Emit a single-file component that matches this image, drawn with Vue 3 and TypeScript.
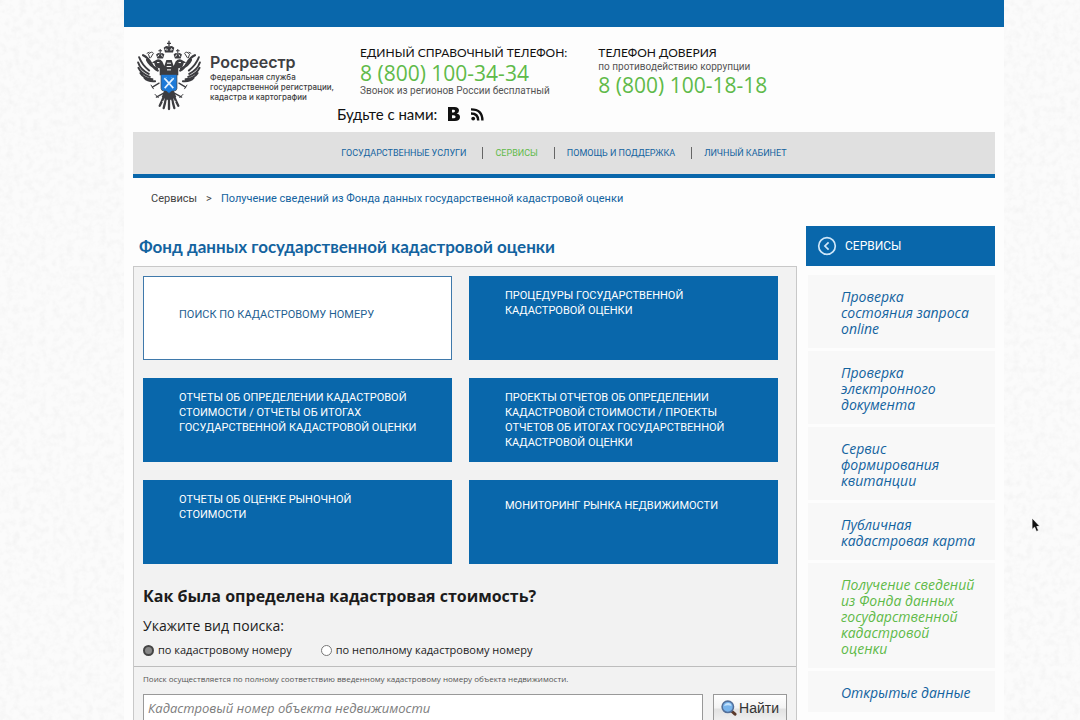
<script setup lang="ts">
import { ref } from 'vue'

interface Tile { text: string; kind: 'active' | 'top' | 'single' }
interface ServiceLink { text: string; current?: boolean }

const navItems = [
  { text: 'Государственные услуги', current: false },
  { text: 'Сервисы', current: true },
  { text: 'Помощь и поддержка', current: false },
  { text: 'Личный кабинет', current: false },
]

const tiles: Tile[] = [
  { text: 'Поиск по кадастровому номеру', kind: 'active' },
  { text: 'Процедуры государственной кадастровой оценки', kind: 'top' },
  { text: 'Отчеты об определении кадастровой стоимости / Отчеты об итогах государственной кадастровой оценки', kind: 'top' },
  { text: 'Проекты отчетов об определении кадастровой стоимости / Проекты отчетов об итогах государственной кадастровой оценки', kind: 'top' },
  { text: 'Отчеты об оценке рыночной стоимости', kind: 'top' },
  { text: 'Мониторинг рынка недвижимости', kind: 'single' },
]

const services: ServiceLink[] = [
  { text: 'Проверка состояния запроса online' },
  { text: 'Проверка электронного документа' },
  { text: 'Сервис формирования квитанции' },
  { text: 'Публичная кадастровая карта' },
  { text: 'Получение сведений из Фонда данных государственной кадастровой оценки', current: true },
  { text: 'Открытые данные' },
]

const searchKind = ref('full')
const query = ref('')
</script>

<template>
  <div class="page">
    <svg class="paper" aria-hidden="true">
      <filter id="grain" x="0" y="0" width="100%" height="100%">
        <feTurbulence type="fractalNoise" baseFrequency="0.15" numOctaves="3" seed="4" />
        <feColorMatrix values="0 0 0 0 0.55  0 0 0 0 0.55  0 0 0 0 0.55  0.25 0 0 0 -0.1" />
      </filter>
      <rect width="100%" height="100%" filter="url(#grain)" />
    </svg>

    <div class="sheet">
      <div class="topbar"></div>

      <header class="header">
        <a class="logo" href="#">
          <svg class="eagle" viewBox="52 120 192 214" aria-hidden="true">
            <g fill="none" stroke="#3c3c40" stroke-linecap="round">
              <path d="M58 172Q66 194 88 212M55 188Q62 210 87 222M56 204Q64 222 90 231M62 220Q72 236 98 238M74 234Q84 246 106 244" stroke-width="6" />
              <path d="M70 166Q84 172 94 190T114 212M82 180Q90 198 112 206" stroke-width="7" />
              <path d="M238 172Q230 194 208 212M241 188Q234 210 209 222M240 204Q232 222 206 231M234 220Q224 236 198 238M222 234Q212 246 190 244" stroke-width="6" />
              <path d="M226 166Q212 172 202 190T182 212M214 180Q206 198 184 206" stroke-width="7" />
              <path d="M82 160L88 157M90 174L86 163Q96 152 101 160L93 173M214 160L208 157M206 174L210 163Q200 152 195 160L203 173" stroke-width="3" />
              <path d="M148 290V328M139 294Q137 308 132 325M157 294Q159 308 164 325M131 294Q127 304 120 318M165 294Q169 304 176 318" stroke-width="7" />
              <path d="M132 280L110 292M164 280L186 292M118 250L98 262M178 250L198 262" stroke-width="4" />
              <path d="M106 284L116 294M190 284L180 294M94 256L101 267M202 256L195 267" stroke-width="3" />
            </g>
            <g fill="#3c3c40">
              <path d="M120 226V205Q105 203 104 190L96 188L108 181Q119 174 128 185L134 198L140 180H156L162 198L168 185Q177 174 188 181L200 188L192 190Q191 203 176 205V226Z" />
              <path d="M136 158L132 143Q140 135 148 141Q156 135 164 143L160 158ZM113 176L109 164Q116 156 122 162Q128 156 134 164L130 176ZM166 176L162 164Q168 156 174 162Q180 156 187 164L183 176Z" />
              <path d="M146 122H150V128H154V132H150V141H146V132H142V128H146ZM120 147H123V151H127V154H123V162H120V154H116V151H120ZM173 147H176V151H180V154H176V162H173V154H169V151H173Z" />
              <path d="M134 272H162L170 292L148 302L126 292Z" />
            </g>
            <path d="M136 150L139 145M158 150L155 145M142 152V147M154 152V147M114 170L118 164M128 170L125 164M168 170L171 164M181 170L178 164M112 188H119M184 188H177M142 190H154M141 200H155M142 210H154" stroke="#fdfdfd" stroke-width="3" />
            <path d="M124 224H172V266Q171 273 164 274H157L148 281L139 274H132Q125 273 124 266Z" fill="#1d7ad8" stroke="#3c3c40" stroke-width="2" />
            <path d="M134 235L161 265M162 235L135 265" stroke="#e6f3ff" stroke-width="5" />
            <path d="M133 240L140 233M155 233L163 241" stroke="#8cc5f2" stroke-width="3" />
            <path d="M127 304L133 309M169 304L163 309M142 303V312M154 303V312" stroke="#fdfdfd" stroke-width="2" />
          </svg>
          <span class="logo-text">
            <strong>Росреестр</strong>
            <span>Федеральная служба<br />государственной регистрации,<br />кадастра и картографии</span>
          </span>
        </a>

        <div class="contacts">
          <div class="phones">
            <div class="phone">
              <div class="phone-title">ЕДИНЫЙ СПРАВОЧНЫЙ ТЕЛЕФОН:</div>
              <div class="number">8 (800) 100-34-34</div>
              <div class="phone-note">Звонок из регионов России бесплатный</div>
            </div>
            <div class="phone">
              <div class="phone-title">ТЕЛЕФОН ДОВЕРИЯ</div>
              <div class="phone-note">по противодействию коррупции</div>
              <div class="number">8 (800) 100-18-18</div>
            </div>
          </div>
          <div class="social">
            <span>Будьте с нами:</span>
            <a href="#" aria-label="ВКонтакте">
              <svg width="12" height="14" viewBox="0 0 12 14"><path fill-rule="evenodd" fill="#111" d="M0 0H6.500Q11 0 11 3.600Q11 6 8.700 6.600Q12 7.200 12 10Q12 14 6.800 14H0ZM4 2.700V5.400H5.500Q7 5.400 7 4T5.500 2.700ZM4 8.200V11.200H5.700Q7.600 11.200 7.600 9.700T5.700 8.200Z" /></svg>
            </a>
            <a href="#" aria-label="RSS">
              <svg width="13" height="13" viewBox="0 0 13 13"><circle cx="2.200" cy="10.600" r="1.900" fill="#111" /><path d="M0 5.500Q7.200 5.500 7.200 12.500M0 1.400Q11.400 1.400 11.400 12.500" fill="none" stroke="#111" stroke-width="2.400" /></svg>
            </a>
          </div>
        </div>
      </header>

      <nav class="nav">
        <a v-for="item in navItems" :key="item.text" href="#" :class="{ current: item.current }">{{ item.text }}</a>
      </nav>

      <div class="crumbs">
        <a class="root" href="#">Сервисы</a><span>&gt;</span><a href="#">Получение сведений из Фонда данных государственной кадастровой оценки</a>
      </div>

      <div class="columns">
        <main class="main">
          <h1>Фонд данных государственной кадастровой оценки</h1>
          <div class="panel">
            <div class="tiles">
              <a v-for="tile in tiles" :key="tile.text" href="#" class="tile" :class="tile.kind">{{ tile.text }}</a>
            </div>
            <form @submit.prevent>
              <h2>Как была определена кадастровая стоимость?</h2>
              <div class="hint">Укажите вид поиска:</div>
              <div class="radios">
                <label><input v-model="searchKind" type="radio" name="kind" value="full" />по кадастровому номеру</label>
                <label><input v-model="searchKind" type="radio" name="kind" value="part" />по неполному кадастровому номеру</label>
              </div>
              <div class="search">
                <label class="search-note" for="query">Поиск осуществляется по полному соответствию введенному кадастровому номеру объекта недвижимости.</label>
                <div class="search-row">
                  <input id="query" v-model="query" type="text" placeholder="Кадастровый номер объекта недвижимости" />
                  <button type="submit">
                    <svg width="16" height="16" viewBox="0 0 16 16" aria-hidden="true"><path d="M10.500 11L14 14.200" stroke="#5b3a2b" stroke-width="3" stroke-linecap="round" /><circle cx="6.800" cy="6.800" r="5.700" fill="#78b4ec" stroke="#536f99" stroke-width="1.600" /><path d="M3 6Q4 3 7.500 3Q10 3.200 10.600 6Q7 4.500 3 6Z" fill="#c5e2fb" /></svg>
                    Найти
                  </button>
                </div>
              </div>
            </form>
          </div>
        </main>

        <aside class="side">
          <a class="side-head" href="#">
            <svg width="20" height="20" viewBox="0 0 20 20" aria-hidden="true"><circle cx="10" cy="10" r="8.300" fill="none" stroke="#cfe6f8" stroke-width="1.700" /><path d="M11.600 6.300L7.900 10L11.600 13.700" fill="none" stroke="#cfe6f8" stroke-width="1.700" /></svg>
            СЕРВИСЫ
          </a>
          <ul>
            <li v-for="service in services" :key="service.text">
              <a href="#" :class="{ current: service.current }">{{ service.text }}</a>
            </li>
          </ul>
        </aside>
      </div>
    </div>

    <svg class="cursor" width="10" height="16" viewBox="0 0 10 16" aria-hidden="true"><path d="M1 1V12.500L3.600 10.200L5.400 14.500L7.600 13.600L5.800 9.500H9Z" fill="#111" stroke="#fff" stroke-width="0.800" /></svg>
  </div>
</template>

<style>
body {
  margin: 0;
}
</style>

<style scoped>
.page {
  --blue: #0967ab;
  --link: #13639f;
  --green: #5fba49;
  position: relative;
  height: 100vh;
  overflow: hidden;
  box-sizing: border-box;
  padding: 0 76px 0 124px;
  background: #fbfbfb;
  color: #1c1c1c;
  font-family: Lato, "Open Sans", sans-serif;
}
a {
  color: inherit;
  text-decoration: none;
}
.paper {
  position: absolute;
  inset: 0;
  width: 100%;
  height: 100%;
}
.sheet {
  position: relative;
  min-height: 100%;
  background: #fdfdfd;
}
.topbar {
  height: 27px;
  background: var(--blue);
}
.header {
  display: flex;
  height: 105px;
  padding: 0 9px;
}
.logo {
  display: flex;
  gap: 9px;
  width: 200px;
  padding: 13px 0 0 4px;
  color: #3f3f43;
  font-family: Inter, sans-serif;
  white-space: nowrap;
}
.eagle {
  width: 64px;
  height: 71px;
}
.logo-text {
  display: flex;
  flex-direction: column;
  padding-top: 12px;
  font-size: 8px;
  line-height: 10px;
  font-weight: 500;
}
.logo-text strong {
  font-size: 16px;
  line-height: 20px;
  font-weight: 600;
}
.phones {
  display: flex;
  gap: 31px;
  padding: 18px 0 0 23px;
}
.phone-title {
  font-size: 12px;
  line-height: 16px;
  color: #111;
}
.number {
  font-family: "Open Sans", sans-serif;
  font-size: 21px;
  line-height: 24px;
  color: var(--green);
}
.phone-note {
  font-family: Roboto, sans-serif;
  font-size: 10px;
  line-height: 12px;
  color: #555;
}
.social {
  display: flex;
  align-items: center;
  gap: 11px;
  padding-top: 7px;
  font-size: 15px;
  line-height: 20px;
  color: #111;
}
.social svg {
  display: block;
}
.nav {
  display: flex;
  justify-content: center;
  align-items: center;
  height: 42px;
  margin: 0 9px;
  border-bottom: 4px solid var(--blue);
  background: #e0e0e0;
  font-family: Roboto, sans-serif;
  font-size: 9px;
  line-height: 12px;
  text-transform: uppercase;
  color: var(--link);
}
.nav a + a {
  margin-left: 16px;
  padding-left: 12px;
  border-left: 1px solid #666;
}
.nav .current {
  color: var(--green);
}
.crumbs {
  display: flex;
  gap: 9px;
  padding: 13px 27px 0;
  font-family: Roboto, sans-serif;
  font-size: 11px;
  line-height: 16px;
  color: var(--link);
}
.crumbs .root,
.crumbs span {
  color: #444;
}
.columns {
  display: flex;
  gap: 9px;
  padding: 19px 9px 0;
}
.main {
  flex: 1;
}
h1 {
  margin: 0;
  padding: 10px 6px 8px;
  font-size: 17px;
  line-height: 22px;
  color: var(--link);
}
.panel {
  border: 1px solid #c8c8c8;
  background: #f2f2f2;
}
.tiles {
  display: grid;
  grid-template-columns: 1fr 1fr;
  gap: 18px 17px;
  padding: 9px 18px 0 9px;
}
.tile {
  box-sizing: border-box;
  height: 84px;
  padding: 12px 33px 0 36px;
  background: var(--blue);
  color: #fff;
  font-family: Roboto, sans-serif;
  font-size: 11px;
  line-height: 15px;
  text-transform: uppercase;
}
.tile.active {
  padding: 30px 32px 0 35px;
  border: 1px solid #3f79ab;
  background: #fff;
  color: #1f5f92;
}
.tile.single {
  padding-top: 18px;
}
form {
  font-family: "Open Sans", sans-serif;
}
h2 {
  margin: 0;
  padding: 20px 9px 8px;
  font-size: 16px;
  line-height: 24px;
}
.hint {
  padding: 0 9px;
  font-size: 14px;
  line-height: 20px;
}
.radios {
  display: flex;
  gap: 29px;
  padding: 5px 9px 7px;
  font-size: 11px;
  line-height: 18px;
}
.radios label {
  display: flex;
  align-items: center;
  gap: 4px;
}
.radios input {
  appearance: none;
  width: 11px;
  height: 11px;
  margin: 0;
  box-sizing: border-box;
  border: 1px solid #777;
  border-radius: 50%;
  background: #fff;
}
.radios input:checked {
  border: 2px solid #444;
  background: #888;
}
.search {
  border-top: 1px solid #bdbdbd;
  padding: 6px 9px 14px;
}
.search-note {
  display: block;
  font-size: 8px;
  line-height: 12px;
  color: #555;
}
.search-row {
  display: flex;
  gap: 10px;
  padding-top: 9px;
}
.search-row input {
  flex: 1;
  min-width: 0;
  height: 28px;
  box-sizing: border-box;
  padding: 0 4px;
  border: 1px solid #999;
  background: #fff;
  font: italic 13px "Open Sans", sans-serif;
}
.search-row input::placeholder {
  color: #7d7d7d;
}
.search-row button {
  display: flex;
  align-items: center;
  gap: 2px;
  height: 28px;
  padding: 0 7px;
  border: 1px solid #999;
  background: linear-gradient(#fff, #f4f4f4 48%, #e2e2e2 56%, #f0f0f0);
  color: #333;
  font: 14px "Liberation Sans", sans-serif;
}
.side {
  width: 189px;
}
.side-head {
  display: flex;
  align-items: center;
  gap: 8px;
  height: 40px;
  padding-left: 11px;
  background: var(--blue);
  color: #fff;
  font-family: Roboto, sans-serif;
  font-size: 12px;
}
.side ul {
  margin: 9px 0 0;
  padding: 0 0 0 2px;
  list-style: none;
}
.side li {
  padding: 14px 18px 11px 33px;
  border-bottom: 3px solid #fdfdfd;
  background: #f8f8f8;
  color: var(--link);
  font-family: "Open Sans", sans-serif;
  font-size: 14px;
  line-height: 16px;
  font-style: italic;
}
.side .current {
  color: var(--green);
}
.cursor {
  position: absolute;
  left: 1031px;
  top: 517px;
}
</style>
